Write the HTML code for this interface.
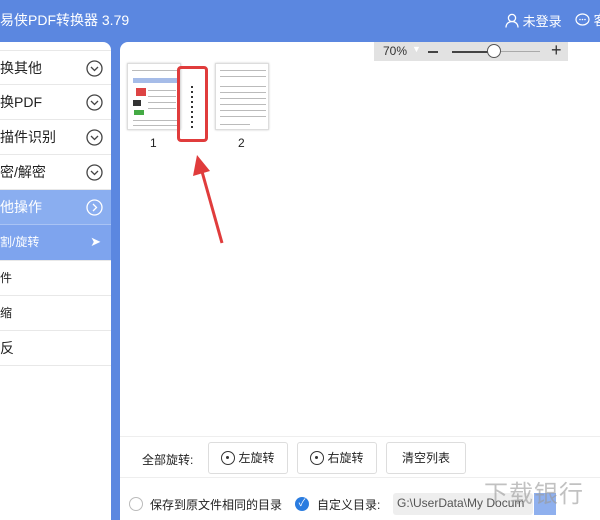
<!DOCTYPE html>
<html><head><meta charset="utf-8"><style>
*{margin:0;padding:0;box-sizing:border-box}
body{width:600px;height:520px;overflow:hidden;background:#5b87e0;font-family:"Liberation Sans","Noto Sans CJK SC",sans-serif;position:relative}
.abs{position:absolute}
.title{left:0;top:10px;color:#fff;font-size:14px}
.side{left:0;top:42px;width:111px;height:478px;background:#fff;border-radius:0 8px 0 0;overflow:hidden}
.row{position:absolute;left:0;width:111px;height:35px;border-bottom:1px solid #e8e8e8;font-size:14px;color:#222;line-height:34px}
.circ{position:absolute;right:8px;top:9px;width:17px;height:17px}
.main{left:120px;top:42px;width:480px;height:478px;background:#fff;border-radius:8px 0 0 0}
.btn{position:absolute;top:442px;height:32px;border:1px solid #ddd;border-radius:3px;background:#fff;font-size:12px;color:#222;text-align:center;line-height:30px}
.rot{display:inline-block;width:14px;height:14px;border:1.5px solid #333;border-radius:50%;vertical-align:-3px;margin-right:3px;position:relative}
.rot:after{content:"";position:absolute;left:4px;top:4px;width:3px;height:3px;background:#333;border-radius:50%}
.doc{position:absolute;background:#fff;border:1px solid #ddd;box-shadow:0 0 2px #ccc}
.ln{position:absolute;height:1px;background:#bbb}
</style></head><body>
<div class="abs title">易侠PDF转换器 3.79</div>
<div class="abs" style="left:505px;top:11px;color:#fff;font-size:13px;white-space:nowrap">
<svg width="14" height="15" style="vertical-align:-2px" viewBox="0 0 14 15"><circle cx="7" cy="5" r="3.6" fill="none" stroke="#fff" stroke-width="1.3"/><path d="M1 14.5c0-4 3-6 6-6s6 2 6 6" fill="none" stroke="#fff" stroke-width="1.3"/></svg> 未登录</div>
<div class="abs" style="left:575px;top:10px;color:#fff;font-size:13px;white-space:nowrap;width:40px"><svg width="15" height="14" viewBox="0 0 15 14" style="vertical-align:-2px"><ellipse cx="7.5" cy="6.5" rx="6.5" ry="5.5" fill="none" stroke="#fff" stroke-width="1.2"/><circle cx="5" cy="6.5" r=".8" fill="#fff"/><circle cx="7.5" cy="6.5" r=".8" fill="#fff"/><circle cx="10" cy="6.5" r=".8" fill="#fff"/></svg> 客</div>

<div class="abs side">
<div class="row" style="top:8px;border-top:1px solid #e8e8e8">换其他<svg class="circ" viewBox="0 0 17 17"><circle cx="8.5" cy="8.5" r="7.5" fill="none" stroke="#444" stroke-width="1.3"/><path d="M5 7l3.5 3.5L12 7" fill="none" stroke="#444" stroke-width="1.3"/></svg></div>
<div class="row" style="top:43px">换PDF<svg class="circ" viewBox="0 0 17 17"><circle cx="8.5" cy="8.5" r="7.5" fill="none" stroke="#444" stroke-width="1.3"/><path d="M5 7l3.5 3.5L12 7" fill="none" stroke="#444" stroke-width="1.3"/></svg></div>
<div class="row" style="top:78px">描件识别<svg class="circ" viewBox="0 0 17 17"><circle cx="8.5" cy="8.5" r="7.5" fill="none" stroke="#444" stroke-width="1.3"/><path d="M5 7l3.5 3.5L12 7" fill="none" stroke="#444" stroke-width="1.3"/></svg></div>
<div class="row" style="top:113px">密/解密<svg class="circ" viewBox="0 0 17 17"><circle cx="8.5" cy="8.5" r="7.5" fill="none" stroke="#444" stroke-width="1.3"/><path d="M5 7l3.5 3.5L12 7" fill="none" stroke="#444" stroke-width="1.3"/></svg></div>
<div class="row" style="top:148px;background:#8aaef0;color:#fff;border-color:#a9c3f4">他操作<svg class="circ" viewBox="0 0 17 17"><circle cx="8.5" cy="8.5" r="7.5" fill="none" stroke="#fff" stroke-width="1.3"/><path d="M7 5l3.5 3.5L7 12" fill="none" stroke="#fff" stroke-width="1.3"/></svg></div>
<div class="row" style="top:183px;background:#7ea4ee;color:#fff;font-size:12px;height:36px">割/旋转<span style="position:absolute;right:10px;top:0;font-size:13px">➤</span></div>
<div class="row" style="top:219px;font-size:12px">件</div>
<div class="row" style="top:254px;font-size:12px">缩</div>
<div class="row" style="top:289px">反</div>
</div>

<div class="abs main"></div>
<div class="abs" style="left:374px;top:42px;width:194px;height:19px;background:#e2e2e2;font-size:12px;color:#333">
<span style="position:absolute;left:9px;top:2px">70%</span>
<span style="position:absolute;left:38px;top:2px;color:#fff;font-size:9px">▼</span>
<div style="position:absolute;left:54px;top:9px;width:10px;height:2px;background:#444"></div>
<div style="position:absolute;left:78px;top:9px;width:44px;height:2px;background:#444"></div>
<div style="position:absolute;left:122px;top:9px;width:44px;height:1px;background:#aaa"></div>
<div style="position:absolute;left:113px;top:2px;width:14px;height:14px;border-radius:50%;background:#fff;border:1px solid #555"></div>
<span style="position:absolute;left:177px;top:-2px;font-size:18px">+</span>
</div>

<div class="doc" style="left:127px;top:63px;width:54px;height:67px">
<div class="ln" style="left:4px;top:6px;width:46px"></div>
<div style="position:absolute;left:5px;top:14px;width:44px;height:5px;background:#6a8fd8;opacity:.6"></div>
<div style="position:absolute;left:8px;top:24px;width:10px;height:8px;background:#d44"></div>
<div style="position:absolute;left:5px;top:36px;width:8px;height:6px;background:#333"></div>
<div style="position:absolute;left:6px;top:46px;width:10px;height:5px;background:#4a4"></div>
<div class="ln" style="left:20px;top:26px;width:28px"></div><div class="ln" style="left:20px;top:32px;width:28px"></div><div class="ln" style="left:20px;top:38px;width:28px"></div><div class="ln" style="left:20px;top:44px;width:28px"></div><div class="ln" style="left:5px;top:56px;width:44px"></div><div class="ln" style="left:5px;top:61px;width:44px"></div>
</div>
<div class="doc" style="left:215px;top:63px;width:54px;height:67px">
<div class="ln" style="left:4px;top:6px;width:46px"></div><div class="ln" style="left:4px;top:12px;width:46px"></div><div class="ln" style="left:4px;top:22px;width:46px"></div><div class="ln" style="left:4px;top:28px;width:46px"></div><div class="ln" style="left:4px;top:34px;width:46px"></div><div class="ln" style="left:4px;top:40px;width:46px"></div><div class="ln" style="left:4px;top:46px;width:46px"></div><div class="ln" style="left:4px;top:52px;width:46px"></div><div class="ln" style="left:4px;top:60px;width:30px"></div>
</div>
<div class="abs" style="left:150px;top:136px;font-size:12px;color:#222">1</div>
<div class="abs" style="left:238px;top:136px;font-size:12px;color:#222">2</div>
<div class="abs" style="left:177px;top:66px;width:31px;height:76px;border:3px solid #e03c3c;border-radius:4px"></div>
<div class="abs" style="left:191px;top:86px;width:2px;height:42px;background:repeating-linear-gradient(#333 0 2px,transparent 2px 5px)"></div>
<svg class="abs" style="left:190px;top:150px" width="40" height="100"><path d="M32 93L11 18" stroke="#e03c3c" stroke-width="3"/><path d="M7 5L3 26L20 21Z" fill="#e03c3c"/></svg>

<div class="abs" style="left:120px;top:436px;width:480px;height:1px;background:#eee"></div>
<div class="abs" style="left:120px;top:477px;width:480px;height:1px;background:#eee"></div>
<div class="abs" style="left:142px;top:451px;font-size:12px;color:#222">全部旋转:</div>
<div class="btn" style="left:208px;width:80px"><span class="rot"></span>左旋转</div>
<div class="btn" style="left:297px;width:80px"><span class="rot"></span>右旋转</div>
<div class="btn" style="left:386px;width:80px">清空列表</div>
<div class="abs" style="left:129px;top:497px;width:14px;height:14px;border:1px solid #bbb;border-radius:50%"></div>
<div class="abs" style="left:150px;top:496px;font-size:12px;color:#222">保存到原文件相同的目录</div>
<div class="abs" style="left:295px;top:497px;width:14px;height:14px;background:#2a7ce0;border-radius:50%;color:#fff;font-size:10px;text-align:center;line-height:14px">✓</div>
<div class="abs" style="left:317px;top:496px;font-size:12px;color:#222">自定义目录:</div>
<div class="abs" style="left:393px;top:493px;width:140px;height:22px;background:#eee;border-radius:3px;font-size:12px;color:#555;padding:3px 4px">G:\UserData\My Docum</div>
<div class="abs" style="left:534px;top:493px;width:22px;height:22px;background:#8fb0ee"></div>
<div class="abs" style="left:484px;top:474px;font-size:24px;color:#999;opacity:.6;letter-spacing:1px;white-space:nowrap">下载银行</div>
</body></html>
